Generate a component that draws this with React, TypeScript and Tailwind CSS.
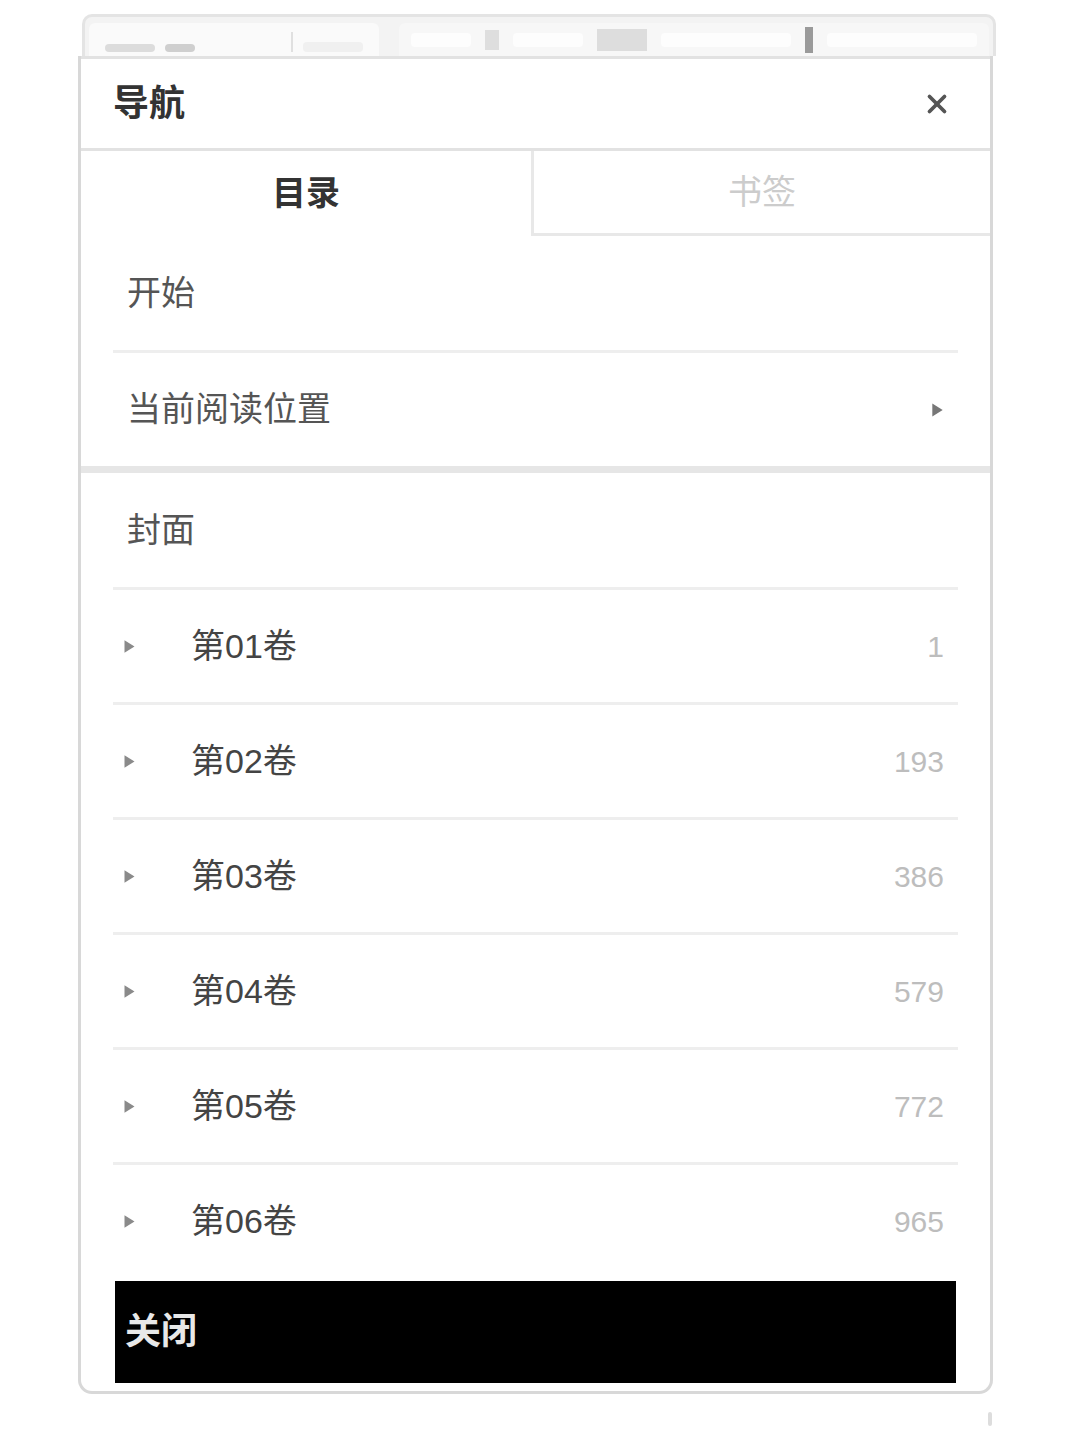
import React from 'react';
import { X } from 'lucide-react';

const volumes = [
  { title: '第01卷', page: '1' },
  { title: '第02卷', page: '193' },
  { title: '第03卷', page: '386' },
  { title: '第04卷', page: '579' },
  { title: '第05卷', page: '772' },
  { title: '第06卷', page: '965' },
];

const Tri = ({ className }: { className?: string }) => (
  <svg viewBox="0 0 10 12" className={className}>
    <path d="M1 1 L9 6 L1 11 Z" fill="currentColor" />
  </svg>
);

const Divider = () => <div className="mx-[32px] h-[3px] bg-[#eeeeee]" />;

export default function App() {
  return (
    <div className="min-h-[1448px] w-[1072px] bg-white font-['Liberation_Sans','Noto_Sans_CJK_SC',sans-serif]">
      {/* page behind the dialog */}
      <div className="ml-[82px] mt-[14px] flex h-[42px] w-[914px] gap-[20px] rounded-t-[10px] border-[3px] border-b-0 border-[#e4e4e4] bg-[#f3f3f3] px-[4px] pt-[6px]">
        <div className="flex w-[290px] items-end gap-[10px] rounded-t-[6px] bg-[#fafafa] px-[16px] pb-[4px]">
          <div className="h-[8px] w-[50px] rounded bg-[#dcdcdc]" />
          <div className="h-[8px] w-[30px] rounded bg-[#cfcfcf]" />
          <div className="ml-auto h-[20px] w-[2px] bg-[#e0e0e0]" />
          <div className="h-[10px] w-[60px] rounded bg-[#f0f0f0]" />
        </div>
        <div className="flex flex-1 items-center gap-[14px] rounded-t-[6px] bg-[#f7f7f7] px-[12px]">
          <div className="h-[14px] w-[60px] rounded bg-[#fdfdfd]" />
          <div className="h-[20px] w-[14px] bg-[#dedede]" />
          <div className="h-[14px] w-[70px] rounded bg-[#fdfdfd]" />
          <div className="h-[22px] w-[50px] bg-[#dddddd]" />
          <div className="h-[14px] w-[130px] rounded bg-[#fdfdfd]" />
          <div className="h-[26px] w-[8px] bg-[#9a9a9a]" />
          <div className="h-[14px] flex-1 rounded bg-[#fdfdfd]" />
        </div>
      </div>

      {/* dialog */}
      <div className="ml-[78px] w-[915px] overflow-hidden rounded-b-[14px] border-[3px] border-t-0 border-[#d8d8d8] bg-white">
        <div className="flex h-[95px] items-center justify-between border-y-[3px] border-[#e2e2e2] pl-[32px] pr-[38px]">
          <span className="text-[36px] font-bold text-[#333333]">导航</span>
          <X className="h-[30px] w-[30px] text-[#555555]" strokeWidth={3} />
        </div>

        <div className="flex h-[85px]">
          <div className="flex flex-1 items-center justify-center text-[34px] font-bold text-[#333333]">目录</div>
          <div className="flex w-[459px] items-center justify-center border-b-[3px] border-l-[3px] border-[#e8e8e8] text-[34px] text-[#cccccc]">
            书签
          </div>
        </div>

        <div className="flex h-[114px] items-center px-[46px] text-[34px] text-[#555555]">开始</div>
        <Divider />
        <div className="flex h-[113px] items-center justify-between px-[46px] text-[34px] text-[#555555]">
          <span>当前阅读位置</span>
          <Tri className="h-[16px] w-[13px] text-[#777777]" />
        </div>
        <div className="h-[7px] bg-[#e6e6e6]" />

        <div className="flex h-[114px] items-center px-[46px] text-[34px] text-[#555555]">封面</div>
        {volumes.map((v) => (
          <React.Fragment key={v.title}>
            <Divider />
            <div className="flex h-[112px] items-center pl-[42px] pr-[46px] text-[34px]">
              <Tri className="h-[15px] w-[13px] text-[#8a8a8a]" />
              <span className="ml-[55px] text-[#444444]">{v.title}</span>
              <span className="ml-auto text-[30px] text-[#bdbdbd]">{v.page}</span>
            </div>
          </React.Fragment>
        ))}

        <div className="mx-[34px] mb-[8px] mt-[4px] flex h-[102px] items-center bg-black px-[10px] text-[36px] font-bold text-[#e8e8e8]">
          关闭
        </div>
      </div>
      <div className="ml-[988px] mt-[18px] h-[14px] w-[4px] rounded bg-[#dddddd]" />
    </div>
  );
}
